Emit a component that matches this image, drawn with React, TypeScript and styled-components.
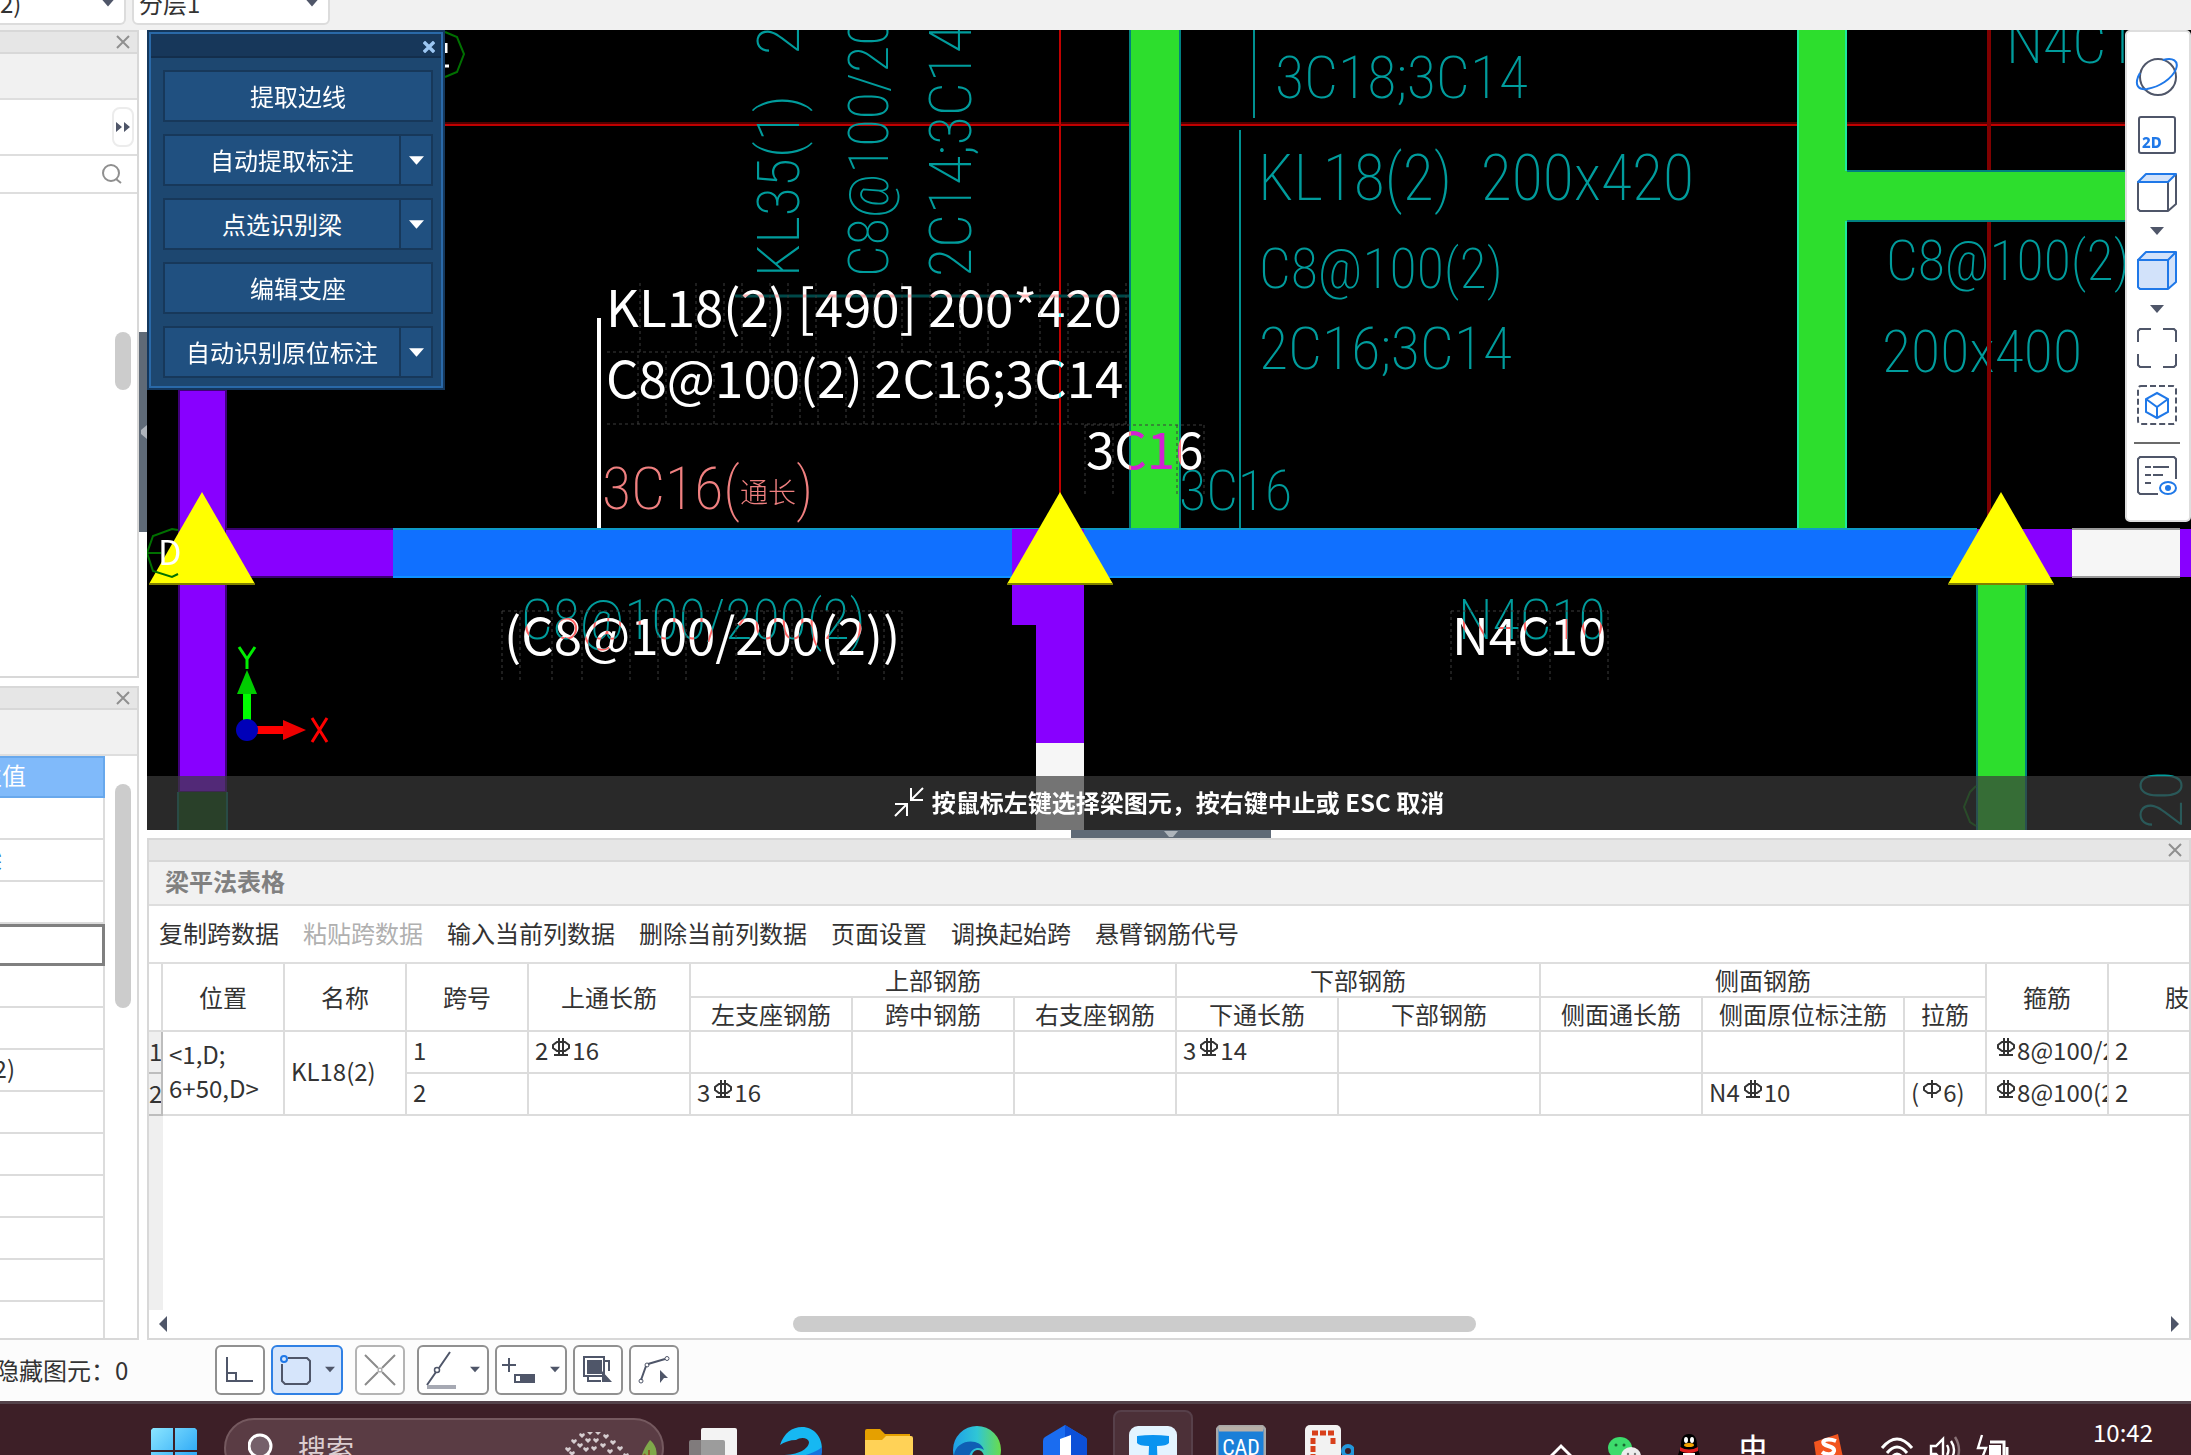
import React from 'react';
import styled, { createGlobalStyle } from 'styled-components';

const UI_FONT = `'Noto Sans CJK SC', 'Noto Sans', sans-serif`;
const INK = '#4f5669';
const BLUE = '#1f78e8';
const TEAL = '#009c9c';

const GlobalStyle = createGlobalStyle`
  *, *::before, *::after { box-sizing: border-box; }
  html, body { margin: 0; padding: 0; overflow: hidden; }
  body { background: #fff; color: #333; font: 24px/34px ${UI_FONT}; }
  button, select, input { font: inherit; color: inherit; margin: 0; padding: 0; border: 0; background: none; }
  svg { display: block; flex: none; }
`;

const Page = styled.div`
  display: flex;
  flex-direction: column;
  height: 100vh;
  overflow: hidden;
`;

/* ---------- top bar ---------- */
const TopBar = styled.header`
  display: flex;
  align-items: flex-end;
  gap: 6px;
  height: 30px;
  padding-bottom: 5px;
  background: #f1f1f1;
  overflow: hidden;
  flex: none;
`;
const SelectBox = styled.label<{ $width: number; $open?: boolean }>`
  position: relative;
  flex: none;
  width: ${p => p.$width}px;
  height: 42px;
  background: #fff;
  border: 2px solid #dcdcdc;
  border-left-width: ${p => (p.$open ? 0 : 2)}px;
  border-radius: ${p => (p.$open ? '0 6px 6px 0' : '6px')};
  svg { position: absolute; right: 10px; top: 14px; pointer-events: none; }
  select {
    appearance: none;
    width: 100%;
    height: 36px;
    padding-left: ${p => (p.$open ? 0 : 5)}px;
    outline: 0;
  }
`;

/* ---------- body ---------- */
const Body = styled.div`
  display: flex;
  flex: 1;
  min-height: 0;
`;
const Side = styled.aside`
  display: flex;
  flex-direction: column;
  gap: 8px;
  width: 139px;
  flex: none;
`;
const SidePanel = styled.section<{ $height?: number }>`
  display: flex;
  flex-direction: column;
  ${p => (p.$height ? `height: ${p.$height}px; flex: none;` : 'flex: 1; min-height: 0;')}
  border: solid #d8d8d8;
  border-width: 2px 2px 2px 0;
  background: #fff;
`;
const PanelBar = styled.div`
  display: flex;
  align-items: center;
  justify-content: flex-end;
  height: 22px;
  padding-right: 7px;
  background: #e6e6e6;
  border-bottom: 2px solid #d8d8d8;
  flex: none;
  button { height: 14px; }
`;
const PanelHead = styled.div`
  height: 46px;
  background: #f1f1f1;
  border-bottom: 2px solid #dedede;
  flex: none;
`;
const MoreRow = styled.div`
  display: flex;
  align-items: center;
  justify-content: flex-end;
  height: 56px;
  padding-right: 3px;
  border-bottom: 2px solid #dedede;
  flex: none;
`;
const MoreButton = styled.button`
  display: grid;
  place-items: center;
  width: 22px;
  height: 40px;
  border: 2px solid #ececec;
  border-radius: 8px;
`;
const SearchRow = styled(MoreRow)`
  height: 38px;
  padding-right: 15px;
`;
const ListArea = styled.div`
  display: flex;
  justify-content: flex-end;
  flex: 1;
  padding: 138px 6px 0 0;
`;
const VThumb = styled.div<{ $height: number }>`
  width: 16px;
  height: ${p => p.$height}px;
  border-radius: 8px;
  background: #ccc;
`;
const PropArea = styled.div`
  display: flex;
  align-items: flex-start;
  flex: 1;
  min-height: 0;
  overflow: hidden;
`;
const PropTable = styled.table`
  width: 105px;
  border-collapse: separate;
  border-spacing: 0;
  table-layout: fixed;
  th, td {
    height: 42px;
    padding: 0 0 4px;
    border: solid #dcdcdc;
    border-width: 0 2px 2px 0;
    font-weight: 400;
    line-height: 34px;
  }
  th {
    color: #fff;
    background: #80bafa;
    border-color: #68a8ec;
    border-top-width: 2px;
  }
  td.selected { border: 3px solid #808080; border-left: 0; }
`;
const Clip = styled.span<{ $width: number; $link?: boolean }>`
  display: flex;
  justify-content: flex-end;
  width: ${p => p.$width}px;
  overflow: hidden;
  white-space: nowrap;
  color: ${p => (p.$link ? '#2a6fc0' : 'inherit')};
`;
const PropScroll = styled.div`
  display: flex;
  justify-content: center;
  flex: 1;
  padding: 28px 0 0 4px;
`;

/* ---------- main column ---------- */
const Main = styled.main`
  display: flex;
  flex-direction: column;
  flex: 1;
  min-width: 0;
`;
const ViewRow = styled.div`
  display: flex;
  flex: 1;
  min-height: 0;
`;
const SplitBar = styled.div<{ $dir: 'v' | 'h' }>`
  display: flex;
  flex: none;
  align-items: center;
  justify-content: center;
  background: #fff;
  ${p => (p.$dir === 'v' ? 'width: 8px; padding-top: 4px;' : 'height: 8px; padding-left: 12px;')}
  button {
    display: grid;
    place-items: center;
    background: #5f6a77;
    ${p => (p.$dir === 'v' ? 'width: 8px; height: 200px;' : 'width: 200px; height: 8px;')}
  }
`;
const Viewport = styled.section`
  position: relative;
  flex: 1;
  min-width: 0;
  overflow: hidden;
  background: #000;
  isolation: isolate;
`;
const Drawing = styled.svg`
  position: absolute;
  left: 0;
  top: 0;
`;
const CadText = styled.text<{ $size?: number; $color?: string }>`
  font-family: 'Roboto Condensed', 'Noto Sans CJK SC', sans-serif;
  font-weight: 200;
  font-size: ${p => p.$size ?? 60}px;
  fill: ${p => p.$color ?? TEAL};
  white-space: pre;
`;
const NoteText = styled.text`
  font-family: ${UI_FONT};
  font-size: 51px;
  fill: #fff;
  mix-blend-mode: difference;
`;
const HintStrip = styled.div`
  position: absolute;
  left: 0;
  right: 0;
  bottom: 0;
  display: flex;
  align-items: center;
  justify-content: center;
  gap: 8px;
  height: 54px;
  padding-bottom: 3px;
  background: rgba(59, 59, 59, 0.695);
  color: #fff;
  font-weight: 700;
`;

/* ---------- floating command box ---------- */
const CommandBox = styled.div`
  position: absolute;
  left: 0;
  top: 0;
  width: 298px;
  border: 2px solid #14375c;
  background: #1d4770;
`;
const CommandInner = styled.div`
  border: 2px solid #2a69a8;
`;
const CommandTitle = styled.div`
  display: flex;
  align-items: center;
  justify-content: flex-end;
  height: 24px;
  padding: 4px 6px 0 0;
  background: #17375a;
  border-bottom: 2px solid #132e4c;
  button { height: 12px; }
`;
const CommandList = styled.div`
  display: flex;
  flex-direction: column;
  gap: 12px;
  padding: 12px 8px 8px 12px;
`;
const Command = styled.div`
  display: flex;
  height: 52px;
  border: 2px solid #17385a;
  background: #205080;
  color: #fff;
`;
const CommandMain = styled.button`
  flex: 1;
  line-height: 46px;
`;
const CommandDrop = styled.button`
  display: grid;
  place-items: center;
  width: 32px;
  border-left: 2px solid #17385a;
`;

/* ---------- view tool column ---------- */
const ViewTools = styled.nav`
  position: absolute;
  right: 0;
  top: 0;
  display: flex;
  flex-direction: column;
  align-items: center;
  width: 66px;
  padding: 24px 2px 14px 0;
  background: #fff;
  border: 2px solid #dedede;
  border-radius: 5px;
  hr { width: 46px; height: 2px; margin: 0; border: 0; background: #6b6b6b; }
`;
const ToolButton = styled.button<{ $height: number }>`
  display: grid;
  place-items: center;
  width: 100%;
  height: ${p => p.$height}px;
`;

/* ---------- beam table panel ---------- */
const TablePanel = styled.section`
  display: flex;
  flex-direction: column;
  flex: none;
  height: 502px;
  margin-left: 8px;
  border: 2px solid #d8d8d8;
  background: #fff;
`;
const PanelTitle = styled.h2`
  margin: 0;
  height: 44px;
  padding-left: 16px;
  font-size: 24px;
  font-weight: 700;
  line-height: 38px;
  color: #808080;
  background: #f1f1f1;
  border-bottom: 2px solid #dedede;
  flex: none;
`;
const TableTools = styled.div`
  display: flex;
  align-items: center;
  gap: 24px;
  height: 58px;
  padding: 0 0 2px 10px;
  border-bottom: 2px solid #dedede;
  flex: none;
  button { line-height: 34px; white-space: nowrap; }
  button:disabled { color: #b0b0b0; }
`;
const GridArea = styled.div`
  flex: 1;
  min-height: 0;
  overflow: hidden;
  background: linear-gradient(to right, #efefef 14px, #fff 14px);
`;
const BeamTable = styled.table`
  width: 2122px;
  table-layout: fixed;
  border-collapse: separate;
  border-spacing: 0;
  background: #fff;
  th, td {
    padding: 0;
    border: solid #dcdcdc;
    border-width: 0 2px 2px 0;
    font-weight: 400;
    white-space: nowrap;
    overflow: hidden;
    line-height: 32px;
  }
  th { height: 34px; }
  td { height: 42px; padding: 0 0 4px 6px; text-align: left; }
  td.pre { white-space: pre; line-height: 34px; }
  tbody th { background: #efefef; border-color: #bdbdbd; padding-bottom: 2px; }
`;
const CellText = styled.span`
  display: flex;
  align-items: center;
  overflow: hidden;
  svg { margin: 0 2px 6px 4px; }
`;
const HScroll = styled.div`
  display: flex;
  align-items: center;
  height: 28px;
  padding: 0 10px;
  flex: none;
`;
const Track = styled.div`
  display: flex;
  flex: 1;
  margin: 0 4px;
`;
const TrackPart = styled.div<{ $share: number; $thumb?: boolean }>`
  flex: ${p => p.$share} 0 0;
  height: 16px;
  border-radius: 8px;
  background: ${p => (p.$thumb ? '#ccc' : 'none')};
`;

/* ---------- status bar ---------- */
const StatusBar = styled.footer`
  display: flex;
  align-items: center;
  height: 64px;
  padding-bottom: 2px;
  background: #fcfcfc;
  border-bottom: 3px solid #54424a;
  flex: none;
  white-space: nowrap;
`;
const StatusText = styled.div`
  width: 215px;
  margin-left: -5px;
  margin-right: 5px;
  flex: none;
`;
const StatusButtons = styled.div`
  display: flex;
  gap: 6px;
`;
const StatusButton = styled.button<{ $drop?: boolean; $on?: boolean; $dim?: boolean; $far?: boolean }>`
  display: flex;
  align-items: center;
  justify-content: center;
  gap: 14px;
  width: ${p => (p.$drop ? 72 : 50)}px;
  height: 50px;
  margin-right: ${p => (p.$far ? 6 : 0)}px;
  border: 2px solid ${p => (p.$on ? '#2f80e4' : p.$dim ? '#b4b4b4' : '#909090')};
  border-radius: 6px;
  background: ${p => (p.$on ? '#d6e5fb' : '#fff')};
`;

/* ---------- taskbar ---------- */
const Taskbar = styled.footer`
  display: flex;
  align-items: flex-start;
  height: 51px;
  padding: 0 38px 0 151px;
  background: #3d1f27;
  overflow: hidden;
  flex: none;
`;
const StartButton = styled.button`
  padding-top: 24px;
  margin-right: 27px;
`;
const SearchPill = styled.label`
  display: flex;
  align-items: center;
  gap: 22px;
  width: 440px;
  height: 60px;
  margin: 14px 5px 0 0;
  padding: 0 2px 0 22px;
  flex: none;
  border: 2px solid #75595f;
  border-radius: 30px;
  background: #5a3c44;
  font-size: 28px;
  input { flex: 1; min-width: 0; height: 56px; outline: 0; }
  input::placeholder { color: #dccdd0; opacity: 1; }
`;
const AppButton = styled.button<{ $active?: boolean }>`
  display: flex;
  justify-content: center;
  width: ${p => (p.$active ? 80 : 88)}px;
  height: 80px;
  margin: ${p => (p.$active ? '6px 4px 0' : '0')};
  padding-top: ${p => (p.$active ? 14 : 21)}px;
  flex: none;
  border-radius: 8px;
  border: ${p => (p.$active ? '2px solid #57404a' : '0')};
  background: ${p => (p.$active ? '#4c3038' : 'none')};
`;
const Tray = styled.div`
  display: flex;
  align-items: flex-start;
  margin-left: auto;
  color: #fff;
`;
const TrayButton = styled.button<{ $width: number; $text?: boolean }>`
  display: flex;
  justify-content: center;
  width: ${p => p.$width}px;
  height: 80px;
  padding-top: ${p => (p.$text ? 24 : 30)}px;
  font-size: 28px;
  font-weight: 500;
  line-height: 38px;
`;
const Clock = styled.time`
  margin: 12px 0 0 76px;
  line-height: 32px;
  font-size: 24px;
`;

/* ---------- icons ---------- */
const Caret = ({ w = 14, h = 8, color = INK }: { w?: number; h?: number; color?: string }) => (
  <svg width={w} height={h} viewBox="0 0 14 8"><path d="M0 0H14L7 8Z" fill={color} /></svg>
);
const Close = ({ size = 14, color = '#8f8f8f', width = 2 }: { size?: number; color?: string; width?: number }) => (
  <svg width={size} height={size} viewBox="0 0 14 14"><path d="M1 1L13 13M13 1L1 13" stroke={color} strokeWidth={width} /></svg>
);
const RebarC = () => (
  <svg width="18" height="19" viewBox="0 0 18 19" fill="none" stroke="#333" strokeWidth="2">
    <path d="M5 4H13L17 7V10L13 13H5L1 10V7ZM7 0V18M11 0V18M2 17H16" />
  </svg>
);
const RebarA = () => (
  <svg width="18" height="19" viewBox="0 0 18 19" fill="none" stroke="#333" strokeWidth="2">
    <path d="M5 4H13L17 7V10L13 13H5L1 10V7ZM9 0V18" />
  </svg>
);
const Cube = ({ solid }: { solid?: boolean }) => {
  const s = solid ? BLUE : INK;
  return (
    <svg width="40" height="39" viewBox="0 0 40 39" fill="none" strokeWidth="2" strokeLinejoin="round">
      {solid && <path d="M1 9L9 1H39V31L31 38H1Z" fill="#d2e2fa" />}
      <path d="M1 9H31V38H3L1 36ZM31 38L39 31V1" stroke={s} />
      <path d="M1 9L9 1H39L31 9Z" stroke={BLUE} fill="#d2e2fa" />
    </svg>
  );
};
const OrbitIcon = () => (
  <svg width="44" height="40" viewBox="0 0 44 40" fill="none" strokeWidth="2">
    <circle cx="23" cy="20" r="18" stroke={INK} />
    <path d="M28 3C38 0 44 4 41 12C37 22 24 30 12 32C3 33 0 28 3 20L5 16" stroke={BLUE} />
  </svg>
);
const TwoDIcon = () => (
  <svg width="38" height="38" viewBox="0 0 38 38">
    <rect x="1" y="1" width="36" height="36" rx="2" fill="none" stroke={INK} strokeWidth="2" />
    <text x="4" y="32" fontFamily="'Noto Sans', sans-serif" fontSize="15" fontWeight="800" fill={BLUE}>2D</text>
  </svg>
);
const FrameIcon = () => (
  <svg width="40" height="40" viewBox="0 0 40 40" fill="none" stroke={INK} strokeWidth="2">
    <path d="M1 14V3L3 1H14M26 1H37L39 3V14M39 26V37L37 39H26M14 39H3L1 37V26" />
  </svg>
);
const BoxSelectIcon = () => (
  <svg width="40" height="40" viewBox="0 0 40 40" fill="none" strokeWidth="2">
    <rect x="1" y="1" width="38" height="38" rx="3" stroke={INK} strokeDasharray="6 3" />
    <path d="M20 8L31 14V27L20 33L9 27V14ZM9 14L20 22L31 14M20 22V33" stroke={BLUE} />
  </svg>
);
const ListEyeIcon = () => (
  <svg width="40" height="39" viewBox="0 0 40 39" fill="none" strokeWidth="2">
    <path d="M39 23V3L37 1H3L1 3V36L3 38H21M8 11H14M16 11H32M8 19H14M16 19H26M8 27H14" stroke={INK} />
    <ellipse cx="31" cy="32" rx="8" ry="6" stroke={BLUE} />
    <circle cx="31" cy="32" r="3" fill={BLUE} />
  </svg>
);

/* ---------- data ---------- */
const commands = [
  { label: '提取边线' },
  { label: '自动提取标注', drop: true },
  { label: '点选识别梁', drop: true },
  { label: '编辑支座' },
  { label: '自动识别原位标注', drop: true },
];
const tableTools = ['复制跨数据', '粘贴跨数据', '输入当前列数据', '删除当前列数据', '页面设置', '调换起始跨', '悬臂钢筋代号'];
const colWidths = [14, 122, 122, 122, 162, 162, 162, 162, 162, 202, 162, 202, 82, 122, 162];

type Part = { a?: string; bar?: 'A' | 'C'; b?: string };
const Rebar = ({ a, bar, b }: Part) => (
  <CellText>{a}{bar === 'C' && <RebarC />}{bar === 'A' && <RebarA />}{b}</CellText>
);
const row1: (Part | null)[] = [{ a: '2', bar: 'C', b: '16' }, null, null, null, { a: '3', bar: 'C', b: '14' }, null, null, null, null, { bar: 'C', b: '8@100/200(2)' }];
const row2: (Part | null)[] = [null, { a: '3', bar: 'C', b: '16' }, null, null, null, null, null, { a: 'N4', bar: 'C', b: '10' }, { a: '(', bar: 'A', b: '6)' }, { bar: 'C', b: '8@100(2)' }];

/* Guide ticks drawn around each annotation: cell top/bottom, rule height and tick positions */
const guides = [
  { y1: 283, y2: 352, line: 352, x0: 607, xs: [640, 696, 724, 742, 770, 788, 816, 874, 902, 930, 960, 988, 1040, 1068, 1126] },
  { y1: 355, y2: 424, line: 424, x0: 607, xs: [638, 666, 714, 772, 800, 818, 846, 864, 873, 936, 964, 1036, 1068, 1126] },
  { y1: 611, y2: 681, line: 611, x0: 502, xs: [502, 520, 552, 582, 630, 658, 686, 736, 764, 792, 838, 884, 902] },
  { y1: 611, y2: 681, line: 611, x0: 1451, xs: [1451, 1518, 1550, 1608] },
  { y1: 425, y2: 495, line: 425, x0: 1085, xs: [1085, 1113, 1177, 1204] },
];

const Support = ({ x }: { x: number }) => (
  <path d={`M${x} 492L${x + 53} 584H${x - 53}Z`} fill="#ff0" />
);

const Model = () => (
  <Drawing width="2044" height="800" viewBox="147 30 2044 800" role="img" aria-label="梁平面图">
    {/* axes */}
    <path d="M445 123H2191" stroke="#500000" strokeWidth="2" />
    <path d="M445 125H2191" stroke="#c00000" strokeWidth="2" />
    <path d="M1060 30V500" stroke="#c00000" strokeWidth="2" />

    {/* reference lettering of the underlying sheet */}
    <CadText x="1275" y="98">3C18;3C14</CadText>
    <CadText x="1258" y="200" $size={64}>KL18(2)  200x420</CadText>
    <CadText x="1259" y="288" $size={56}>C8@100(2)</CadText>
    <CadText x="1259" y="369">2C16;3C14</CadText>
    <CadText x="1179" y="510" $size={56}>3C16</CadText>
    <CadText x="521" y="639" $size={56}>C8@100/200(2)</CadText>
    <CadText x="1458" y="639" $size={56}>N4C10</CadText>
    <CadText x="2006" y="63">N4C10</CadText>
    <CadText x="1886" y="280" $size={56}>C8@100(2)</CadText>
    <CadText x="1882" y="372">200x400</CadText>
    <CadText x="602" y="509" $color="#f08080">3C16(<tspan fontSize="28" dy="-6">通长</tspan><tspan dy="6">)</tspan></CadText>
    <CadText transform="translate(799 277) rotate(-90)">KL35(1)   200x400</CadText>
    <CadText transform="translate(888 277) rotate(-90)" $size={56}>C8@100/200(2)</CadText>
    <CadText transform="translate(971 277) rotate(-90)">2C14;3C14</CadText>
    <CadText transform="translate(2182 829) rotate(-90)">20</CadText>
    <path d="M735 296H1129" stroke="#004848" strokeWidth="3" />
    <path d="M1254 30V118M1240 130V528" stroke="#009090" strokeWidth="2" />
    <path d="M1989 30V530" stroke="#800000" strokeWidth="4" />

    {/* beams and columns */}
    <g strokeWidth="2">
      <path d="M179 390H226V792H179Z" fill="#80f" stroke="#40007a" />
      <path d="M178 792H227V830H178Z" fill="#034b03" />
      <path d="M178 792V830M227 792V830" stroke="#007060" />
      <path d="M226 529H393V577H226Z" fill="#80f" />
      <path d="M226 529H393M250 577H393" stroke="#3a0070" />
      <path d="M1130 30H1180V530H1130Z" fill="#2dde2d" />
      <path d="M1130 30V529M1180 30V529" stroke="#008080" />
      <path d="M1798 30H1846V530H1798Z" fill="#2dde2d" />
      <path d="M1846 171H2191V221H1846Z" fill="#2dde2d" />
      <path d="M1847 171H2191M1847 221H2191" stroke="#008080" />
      <path d="M1798 30V529M1846 30V171M1846 221V529" stroke="#1de9a0" />
      <path d="M393 529H1977V577H393Z" fill="#1070ff" />
      <path d="M393 529H1977" stroke="#0d9ac8" />
      <path d="M393 577H1977" stroke="#1090ff" />
      <path d="M1012 529H1084V743H1036V625H1012Z" fill="#80f" />
      <path d="M1036 743H1084V830H1036Z" fill="#f6f6f6" />
      <path d="M1084 530H1110V578H1084Z" fill="#1070ff" />
      <path d="M1977 529H2072V577H1977ZM2180 529H2191V577H2180Z" fill="#80f" />
      <path d="M2072 529H2180V577H2072Z" fill="#f6f6f6" />
      <path d="M2072 529H2180M2072 577H2180" stroke="#999" />
      <path d="M1977 578H2026V832H1977Z" fill="#2dde2d" stroke="#008080" />
    </g>
    <Support x={202} />
    <Support x={1060} />
    <Support x={2001} />
    <path d="M149 584H255M1007 584H1113M1948 584H2054" stroke="#808000" strokeWidth="2" />

    {/* axis bubbles */}
    <g fill="none" stroke="#007000" strokeWidth="2">
      <path d="M445 32L457 37L464 54L457 72L445 77" />
      <path d="M178 530L172 529L153 536L147 553L153 571L172 577L178 574M147 553H161" />
      <path d="M1976 786L1970 792L1964 807L1970 822L1976 826" />
    </g>
    <text x="158" y="565" fontFamily={UI_FONT} fontSize="34" fill="#fff">D</text>
    <path d="M446 43V53M445 66H449" stroke="#fff" strokeWidth="3" />

    {/* leader and selected-beam annotations */}
    <path d="M599 318V528" stroke="#fff" strokeWidth="4" />
    <g stroke="#3c3c3c" strokeWidth="1" strokeDasharray="3 3">
      {guides.map((g, i) => (
        <path key={i} d={`M${g.x0} ${g.line}H${g.xs[g.xs.length - 1]}` + g.xs.map(x => `M${x} ${g.y1}V${g.y2}`).join('')} />
      ))}
    </g>
    <NoteText x="606" y="327">KL18(2) [490] 200*420</NoteText>
    <NoteText x="606" y="398">C8@100(2) 2C16;3C14</NoteText>
    <NoteText x="1086" y="469">3C16</NoteText>
    <NoteText x="504" y="655">(C8@100/200(2))</NoteText>
    <NoteText x="1452" y="655">N4C10</NoteText>

    {/* coordinate tripod */}
    <path d="M243 694H251V720H243Z" fill="#0f0" />
    <path d="M247 670L257 694H237Z" fill="#0c0" />
    <path d="M239 647L247 659L255 647M247 659V669" fill="none" stroke="#0e0" strokeWidth="3" />
    <path d="M257 726H283V734H257Z" fill="#f00" />
    <path d="M283 720L306 730L283 740Z" fill="#e00" />
    <path d="M312 718L327 742M327 718L312 742" stroke="#f00" strokeWidth="3" />
    <circle cx="247" cy="730" r="11" fill="#0000b8" />
  </Drawing>
);

const TopSelect = ({ value, width, open, label }: { value: string; width: number; open?: boolean; label: string }) => (
  <SelectBox $width={width} $open={open}>
    <select aria-label={label} defaultValue={value}><option>{value}</option></select>
    <Caret w={12} />
  </SelectBox>
);

const propRows = ['', 'link', '', 'selected', '', '', '2)', '', '', '', '', '', ''];

export default function App() {
  return (
    <Page>
      <GlobalStyle />
      <TopBar>
        <TopSelect value="2)" width={126} open label="构件" />
        <TopSelect value="分层1" width={198} label="分层" />
      </TopBar>

      <Body>
        <Side>
          <SidePanel>
            <PanelBar><button aria-label="关闭"><Close /></button></PanelBar>
            <PanelHead />
            <MoreRow>
              <MoreButton aria-label="更多">
                <svg width="14" height="10" viewBox="0 0 14 10"><path d="M0 0L6 5L0 10ZM8 0L14 5L8 10Z" fill={INK} /></svg>
              </MoreButton>
            </MoreRow>
            <SearchRow>
              <button aria-label="搜索构件">
                <svg width="20" height="20" viewBox="0 0 20 20" fill="none" stroke="#8f8f8f" strokeWidth="2"><circle cx="9" cy="9" r="8" /><path d="M14 15L19 19" /></svg>
              </button>
            </SearchRow>
            <ListArea><VThumb $height={58} /></ListArea>
          </SidePanel>

          <SidePanel $height={654}>
            <PanelBar><button aria-label="关闭"><Close /></button></PanelBar>
            <PanelHead />
            <PropArea>
              <PropTable>
                <thead><tr><th><Clip $width={26}>性值</Clip></th></tr></thead>
                <tbody>
                  {propRows.map((r, i) => (
                    <tr key={i}>
                      <td className={r === 'selected' ? 'selected' : undefined}>
                        {r === 'link' && <Clip $width={2} $link>梁</Clip>}
                        {r === '2)' && <Clip $width={15}>2)</Clip>}
                      </td>
                    </tr>
                  ))}
                </tbody>
              </PropTable>
              <PropScroll><VThumb $height={224} /></PropScroll>
            </PropArea>
          </SidePanel>
        </Side>

        <Main>
          <ViewRow>
            <SplitBar $dir="v">
              <button aria-label="收起侧栏"><svg width="8" height="14" viewBox="0 0 8 14"><path d="M8 0V14L2 9V5Z" fill="#aeb4bb" /></svg></button>
            </SplitBar>
            <Viewport>
              <Model />
              <HintStrip>
                <svg width="30" height="30" viewBox="0 0 30 30" fill="none" stroke="#fff" strokeWidth="2">
                  <path d="M17 1V13H29M18 12L29 1M1 17H13V29M12 18L1 29" />
                </svg>
                按鼠标左键选择梁图元，按右键中止或 ESC 取消
              </HintStrip>
              <CommandBox>
                <CommandInner>
                  <CommandTitle><button aria-label="关闭"><Close size={12} color="#9cc6f2" width={4} /></button></CommandTitle>
                  <CommandList>
                    {commands.map(c => (
                      <Command key={c.label}>
                        <CommandMain>{c.label}</CommandMain>
                        {c.drop && <CommandDrop aria-label={`${c.label} 选项`}><Caret w={15} h={9} color="#fff" /></CommandDrop>}
                      </Command>
                    ))}
                  </CommandList>
                </CommandInner>
              </CommandBox>
              <ViewTools aria-label="视图工具">
                <ToolButton $height={42} aria-label="动态观察"><OrbitIcon /></ToolButton>
                <ToolButton $height={74} aria-label="二维"><TwoDIcon /></ToolButton>
                <ToolButton $height={40} aria-label="俯视"><Cube /></ToolButton>
                <ToolButton $height={38} aria-label="更多视角"><Caret /></ToolButton>
                <ToolButton $height={40} aria-label="实体显示"><Cube solid /></ToolButton>
                <ToolButton $height={38} aria-label="更多显示"><Caret /></ToolButton>
                <ToolButton $height={40} aria-label="全屏"><FrameIcon /></ToolButton>
                <ToolButton $height={74} aria-label="局部三维"><BoxSelectIcon /></ToolButton>
                <hr />
                <ToolButton $height={62} aria-label="显示设置"><ListEyeIcon /></ToolButton>
              </ViewTools>
            </Viewport>
          </ViewRow>

          <SplitBar $dir="h">
            <button aria-label="收起表格"><svg width="14" height="6" viewBox="0 0 14 6"><path d="M0 0H14L9 6H5Z" fill="#aeb4bb" /></svg></button>
          </SplitBar>

          <TablePanel>
            <PanelBar><button aria-label="关闭"><Close /></button></PanelBar>
            <PanelTitle>梁平法表格</PanelTitle>
            <TableTools>
              {tableTools.map((t, i) => <button key={t} disabled={i === 1}>{t}</button>)}
            </TableTools>
            <GridArea>
              <BeamTable>
                <colgroup>{colWidths.map((w, i) => <col key={i} style={{ width: w }} />)}</colgroup>
                <thead>
                  <tr>
                    <th rowSpan={2} />
                    <th rowSpan={2}>位置</th>
                    <th rowSpan={2}>名称</th>
                    <th rowSpan={2}>跨号</th>
                    <th rowSpan={2}>上通长筋</th>
                    <th colSpan={3}>上部钢筋</th>
                    <th colSpan={2}>下部钢筋</th>
                    <th colSpan={3}>侧面钢筋</th>
                    <th rowSpan={2}>箍筋</th>
                    <th rowSpan={2}>肢数</th>
                  </tr>
                  <tr>
                    {['左支座钢筋', '跨中钢筋', '右支座钢筋', '下通长筋', '下部钢筋', '侧面通长筋', '侧面原位标注筋', '拉筋'].map(h => <th key={h}>{h}</th>)}
                  </tr>
                </thead>
                <tbody>
                  <tr>
                    <th>1</th>
                    <td rowSpan={2} className="pre">{'<1,D;\n6+50,D>'}</td>
                    <td rowSpan={2}>KL18(2)</td>
                    <td>1</td>
                    {row1.map((c, i) => <td key={i}>{c && <Rebar {...c} />}</td>)}
                    <td>2</td>
                  </tr>
                  <tr>
                    <th>2</th>
                    <td>2</td>
                    {row2.map((c, i) => <td key={i}>{c && <Rebar {...c} />}</td>)}
                    <td>2</td>
                  </tr>
                </tbody>
              </BeamTable>
            </GridArea>
            <HScroll>
              <svg width="8" height="16" viewBox="0 0 8 16"><path d="M8 0V16L0 8Z" fill={INK} /></svg>
              <Track>
                <TrackPart $share={622} />
                <TrackPart $share={683} $thumb />
                <TrackPart $share={691} />
              </Track>
              <svg width="8" height="16" viewBox="0 0 8 16"><path d="M0 0V16L8 8Z" fill={INK} /></svg>
            </HScroll>
          </TablePanel>
        </Main>
      </Body>

      <StatusBar>
        <StatusText>隐藏图元：0</StatusText>
        <StatusButtons>
          <StatusButton aria-label="正交">
            <svg width="28" height="26" viewBox="0 0 28 26" fill="none" stroke={INK} strokeWidth="2"><path d="M1 0V24H27M1 16H10V24" /></svg>
          </StatusButton>
          <StatusButton $drop $on $far aria-label="捕捉">
            <svg width="32" height="30" viewBox="0 0 32 30" fill="none" strokeWidth="2">
              <path d="M9 3H28L31 6V26L28 29H6L3 26V9" stroke={INK} /><circle cx="5" cy="4" r="3" stroke={BLUE} />
            </svg>
            <Caret w={10} h={7} />
          </StatusButton>
          <StatusButton $dim $far aria-label="交点">
            <svg width="32" height="32" viewBox="0 0 32 32" fill="none" stroke="#8c8c8c" strokeWidth="2"><path d="M1 1L14 14M31 1L18 14M1 31L14 18M31 31L18 18" /><circle cx="16" cy="16" r="2" strokeWidth="1" /></svg>
          </StatusButton>
          <StatusButton $drop aria-label="角度">
            <svg width="30" height="38" viewBox="0 0 30 38" fill="none" stroke={INK} strokeWidth="2"><path d="M24 1L13 17M10 21L1 34" /><circle cx="11" cy="19" r="2.5" strokeWidth="1.5" /><path d="M1 36H30" stroke="#a6a9b3" strokeWidth="4" /></svg>
            <Caret w={10} h={7} />
          </StatusButton>
          <StatusButton $drop aria-label="偏移">
            <svg width="34" height="26" viewBox="0 0 34 26" fill="none" stroke={INK} strokeWidth="2"><path d="M0 8H14M7 1V15M13 18H32V25H13Z" /><path d="M18 17H33V26H18Z" fill={INK} stroke="none" /></svg>
            <Caret w={10} h={7} />
          </StatusButton>
          <StatusButton aria-label="图层">
            <svg width="30" height="28" viewBox="0 0 30 28" fill="none" stroke={INK} strokeWidth="2"><path d="M1 1H21V20H1ZM21 5H26V15M5 20V25H18" /><path d="M4 4H19V18H4ZM19 15L29 26H19Z" fill={INK} stroke="none" /></svg>
          </StatusButton>
          <StatusButton aria-label="折线选择">
            <svg width="32" height="28" viewBox="0 0 32 28" fill="none" stroke={INK} strokeWidth="2"><path d="M3 24L8 10M10 8L27 3" /><circle cx="3" cy="25" r="2" strokeWidth="1" /><circle cx="9" cy="9" r="2" strokeWidth="1" /><circle cx="29" cy="2.5" r="2" strokeWidth="1" /><path d="M22 14L30 22L26 22L22 27Z" fill={INK} stroke="none" /></svg>
          </StatusButton>
        </StatusButtons>
      </StatusBar>

      <Taskbar>
        <StartButton aria-label="开始">
          <svg width="46" height="46" viewBox="0 0 46 46">
            <defs><linearGradient id="win" x1="0" y1="0" x2="1" y2="1"><stop offset="0" stopColor="#8be6ff" /><stop offset="1" stopColor="#1498f4" /></linearGradient></defs>
            <path d="M2 0H22V22H0V2ZM24 0H44L46 2V22H24ZM0 24H22V46H0ZM24 24H46V46H24Z" fill="url(#win)" />
          </svg>
        </StartButton>
        <SearchPill>
          <svg width="28" height="30" viewBox="0 0 28 30" fill="none" stroke="#fff" strokeWidth="3"><circle cx="12" cy="13" r="11" fill="#75606a" /><path d="M19 21L27 29" /></svg>
          <input type="search" aria-label="搜索" placeholder="搜索" />
          <svg width="102" height="32" viewBox="0 0 102 32">
            <g fill="#d6cdd0">
              {[[4, 28], [10, 20], [16, 12], [24, 6], [32, 3], [40, 3], [48, 7], [55, 13], [62, 19], [68, 26], [74, 31], [14, 24], [22, 16], [30, 11], [38, 11], [45, 16], [28, 20], [52, 22], [58, 28], [20, 28], [36, 19]].map(([x, y], i) => (
                <path key={i} d={`M${x} ${y}l-3 -3l1 -2l2 1l2 -1l1 2z`} />
              ))}
            </g>
            <path d="M92 8C99 14 100 22 97 32H84C82 24 86 16 92 8Z" fill="#7fa84a" />
            <path d="M91 18V32M86 22L91 28" stroke="#8b5a2b" strokeWidth="2" />
          </svg>
        </SearchPill>
        <AppButton aria-label="任务视图">
          <svg width="50" height="50" viewBox="0 0 50 50"><rect x="13" y="3" width="36" height="40" rx="2" fill="#f3f3f3" /><rect x="1" y="15" width="36" height="34" rx="2" fill="#8c8c8c" fillOpacity=".85" /></svg>
        </AppButton>
        <AppButton aria-label="浏览器">
          <svg width="46" height="48" viewBox="0 0 46 48">
            <path d="M2 20C6 8 14 2 24 2C36 2 44 12 44 24C44 32 38 34 28 36L12 38L4 30C20 30 31 24 31 17C30 12 22 12 18 15C12 15 6 17 2 20Z" fill="#16b8f2" />
            <path d="M2 34C18 34 38 28 44 22C45 40 34 46 20 46C10 46 4 40 2 34Z" fill="#1672dc" />
          </svg>
        </AppButton>
        <AppButton aria-label="文件资源管理器">
          <svg width="50" height="46" viewBox="0 0 50 46"><path d="M1 6Q1 4 3 4H16L21 9H46V46H1Z" fill="#e5a000" /><path d="M1 15H18L22 11H47Q49 11 49 13V46H1Z" fill="#ffd257" /></svg>
        </AppButton>
        <AppButton aria-label="Edge">
          <svg width="50" height="50" viewBox="0 0 50 50">
            <defs><linearGradient id="edge" x1="0" y1="0" x2="1" y2="0"><stop offset="0" stopColor="#1e9fe8" /><stop offset=".5" stopColor="#2fc6d6" /><stop offset="1" stopColor="#6bdc4a" /></linearGradient></defs>
            <circle cx="25" cy="25" r="24" fill="url(#edge)" /><path d="M2 30C4 14 28 12 32 25C26 20 16 24 17 36L22 49C8 48 1 40 2 30Z" fill="#0f5fb4" /><path d="M20 30C22 22 32 24 32 32L28 38H20Z" fill="#3d1f27" />
          </svg>
        </AppButton>
        <AppButton aria-label="安全卫士">
          <svg width="44" height="50" viewBox="0 0 44 50"><path d="M22 0L42 12Q44 13 44 16V50H0V16Q0 13 2 12Z" fill="#1a6cf0" /><path d="M22 0L42 12Q44 13 44 16V50H22Z" fill="#0c50d8" /><path d="M17 14L28 10V50H17Z" fill="#fff" /></svg>
        </AppButton>
        <AppButton $active aria-label="广联达">
          <svg width="48" height="48" viewBox="0 0 48 48"><rect width="48" height="60" rx="9" fill="#e4f4ff" /><path d="M8 10Q24 8 40 10V17Q38 20 28 20L29 48H19L20 20Q10 20 8 17Z" fill="#0a93f0" /></svg>
        </AppButton>
        <AppButton aria-label="CAD">
          <svg width="50" height="48" viewBox="0 0 50 48"><rect x="1" y="1" width="48" height="60" rx="5" fill="#1a7fd8" stroke="#a8a8a8" strokeWidth="3" /><path d="M3 4H47" stroke="#b8b0a8" strokeWidth="5" /><text x="25" y="30" textAnchor="middle" fontFamily="'Roboto Condensed', sans-serif" fontSize="22" fontWeight="400" fill="#fff">CAD</text></svg>
        </AppButton>
        <AppButton aria-label="截图工具">
          <svg width="50" height="48" viewBox="0 0 50 48"><rect x="1" y="0" width="36" height="56" rx="5" fill="#f2f2f2" /><path d="M8 8H30M9 13V32M29 13V20" stroke="#d8401c" strokeWidth="5" strokeDasharray="6 2" fill="none" /><circle cx="44" cy="26" r="5" fill="none" stroke="#2398dc" strokeWidth="4" /><path d="M41 30L30 42" stroke="#2398dc" strokeWidth="4" /></svg>
        </AppButton>

        <Tray>
          <TrayButton $width={64} aria-label="显示隐藏的图标"><svg width="22" height="26" viewBox="0 0 22 26" fill="none" stroke="#fff" strokeWidth="3"><path d="M1 22L11 12L21 22" /></svg></TrayButton>
          <TrayButton $width={64} aria-label="微信">
            <svg width="34" height="32" viewBox="0 0 34 32"><ellipse cx="12" cy="14" rx="12" ry="11" fill="#3ddb6c" /><ellipse cx="23" cy="22" rx="10" ry="9" fill="#ececec" /><circle cx="8" cy="11" r="1.5" fill="#176b32" /><circle cx="16" cy="11" r="1.5" fill="#176b32" /><circle cx="20" cy="20" r="1.2" fill="#777" /><circle cx="27" cy="20" r="1.2" fill="#777" /></svg>
          </TrayButton>
          <TrayButton $width={64} aria-label="QQ">
            <svg width="26" height="32" viewBox="0 0 26 32"><path d="M13 0C20 0 21 6 21 12L25 24H1L5 12C5 6 6 0 13 0Z" fill="#000" /><ellipse cx="10" cy="6" rx="2" ry="3" fill="#fff" /><ellipse cx="16" cy="6" rx="2" ry="3" fill="#fff" /><ellipse cx="13" cy="11" rx="5" ry="2" fill="#f5a300" /><path d="M4 13Q13 18 22 13V17Q13 21 4 17Z" fill="#e01f1f" /><path d="M7 19H19V32H7Z" fill="#fff" /></svg>
          </TrayButton>
          <TrayButton $width={64} $text>中</TrayButton>
          <TrayButton $width={88} aria-label="搜狗输入法">
            <svg width="34" height="32" viewBox="0 0 34 32"><path d="M2 8L26 0L32 28L6 36Z" fill="#f2551f" /><path d="M24 7C16 4 9 6 12 10C15 13 23 12 22 17C21 21 14 21 10 18" fill="none" stroke="#fff" strokeWidth="4" /></svg>
          </TrayButton>
          <TrayButton $width={48} aria-label="网络"><svg width="34" height="32" viewBox="0 0 34 32" fill="none" stroke="#fff" strokeWidth="3"><path d="M2 14Q17 -4 32 14M7 19Q17 7 27 19M12 23Q17 17 22 23" /><circle cx="17" cy="27" r="2" fill="#fff" /></svg></TrayButton>
          <TrayButton $width={48} aria-label="音量"><svg width="32" height="32" viewBox="0 0 32 32" fill="none" stroke="#fff" strokeWidth="2.4"><path d="M2 12H7L14 5V27L7 20H2ZM18 11Q21 16 18 21M22 7Q28 16 22 25" /><path d="M26 3Q34 16 26 29" stroke="#8a7378" /></svg></TrayButton>
          <TrayButton $width={48} aria-label="电池"><svg width="34" height="32" viewBox="0 0 34 32" fill="none" stroke="#fff" strokeWidth="3"><path d="M14 8H28V26H6" /><path d="M31 13V21" /><path d="M6 1L2 14H10L6 24" strokeWidth="2.4" /><path d="M13 11H25V23H13Z" fill="#fff" stroke="none" /></svg></TrayButton>
          <Clock>10:42</Clock>
        </Tray>
      </Taskbar>
    </Page>
  );
}
